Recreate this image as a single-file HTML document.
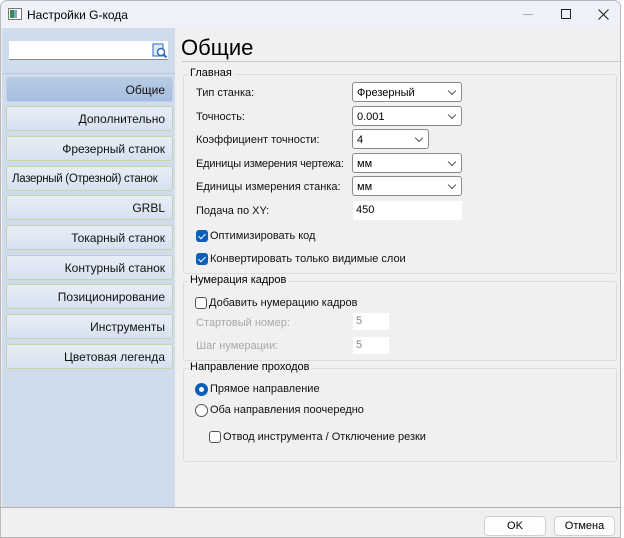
<!DOCTYPE html>
<html><head><meta charset="utf-8"><style>
*{box-sizing:border-box;margin:0;padding:0}
body{width:624px;height:538px;overflow:hidden;background:#fff;font-family:"Liberation Sans","DejaVu Sans",sans-serif;font-size:11px;color:#000;position:relative}
.abs{position:absolute;white-space:nowrap}
.win{left:0;top:0;width:621px;height:538px;background:#f0f0f0;border:1px solid #b8b8b8;border-radius:7px 7px 0 0;overflow:hidden}
.title{left:0;top:0;width:621px;height:27px;background:#eef2f8}
.side{left:1px;top:27px;width:173px;height:479px;background:#cfdcec}
.btn{position:absolute;left:4px;width:167px;height:25px;border:1px solid #c6d3a8;border-radius:3px;background:linear-gradient(#e8eef7,#d6e1ef);text-align:right;padding-right:7px;line-height:24px;font-size:12px;color:#111;white-space:nowrap}
.btn.sel{background:linear-gradient(#b8cbe6,#a6bddd);border-color:#c0cde0}
.lbl{position:absolute;font-size:11px;color:#111;white-space:nowrap}
.combo{position:absolute;height:20px;background:#fff;border:1px solid #8a8a8a;border-radius:3px;padding-left:4px;line-height:20px;font-size:11px}
.combo:after{content:"";position:absolute;right:6px;top:5px;width:5px;height:5px;border-right:1px solid #555;border-bottom:1px solid #555;transform:rotate(45deg)}
.grp{position:absolute;border:1px solid #dcdcdc;border-radius:3px}
.gt{position:absolute;background:#f0f0f0;padding:0 2px;font-size:11px;top:-8px;left:4px;white-space:nowrap}
.cb{position:absolute;width:12px;height:12px;border-radius:3px;background:#0a5fb8}
.cb:after{content:"";position:absolute;left:4px;top:2px;width:3px;height:6px;border-right:1.5px solid #fff;border-bottom:1.5px solid #fff;transform:rotate(45deg)}
.cbe{position:absolute;width:12px;height:12px;border-radius:3px;border:1px solid #555;background:#fff}
.pbtn{position:absolute;height:20px;background:#fdfdfd;border:1px solid #d0d0d0;border-radius:4px;text-align:center;line-height:18px;font-size:11px}
</style></head><body>
<div class="abs win">
<div class="abs title"></div>
<svg class="abs" style="left:7px;top:7px" width="14" height="12"><rect x="0.5" y="0.5" width="13" height="11" fill="#fff" stroke="#777"/><rect x="2" y="2" width="4" height="8" fill="#3a8a5a"/><rect x="6" y="2" width="3" height="8" fill="#7fa8d0"/></svg>
<div class="abs" style="left:26px;top:7px;font-size:12px">Настройки G-кода</div>
<div class="abs" style="left:522px;top:13px;width:10px;height:1px;background:#aaa"></div>
<div class="abs" style="left:560px;top:8px;width:10px;height:10px;border:1px solid #222"></div>
<svg class="abs" style="left:597px;top:8px" width="11" height="11"><path d="M0.5 0.5L10.5 10.5M10.5 0.5L0.5 10.5" stroke="#222" stroke-width="1.1"/></svg>

<div class="abs side">
<div class="abs" style="left:7px;top:13px;width:159px;height:19px;background:#fff;border-bottom:1px solid #888"></div>
<svg class="abs" style="left:150px;top:15px" width="16" height="16"><rect x="1" y="1" width="10" height="12" fill="#dfeaf8" stroke="#2a6ac0"/><circle cx="9" cy="9" r="3.5" fill="#fff" stroke="#2a6ac0" stroke-width="1.4"/><path d="M11.5 11.5L14.5 14.5" stroke="#2a6ac0" stroke-width="2"/></svg>
<div class="abs" style="left:0;top:45px;width:173px;height:1px;background:#b8c6d8"></div>
<div class="btn sel" style="top:49px">Общие</div>
<div class="btn" style="top:78px">Дополнительно</div>
<div class="btn" style="top:108px">Фрезерный станок</div>
<div class="btn" style="top:138px;text-align:left;padding-left:5px;font-size:11.5px;letter-spacing:-0.3px">Лазерный (Отрезной) станок</div>
<div class="btn" style="top:167px">GRBL</div>
<div class="btn" style="top:197px">Токарный станок</div>
<div class="btn" style="top:227px">Контурный станок</div>
<div class="btn" style="top:256px">Позиционирование</div>
<div class="btn" style="top:286px">Инструменты</div>
<div class="btn" style="top:316px">Цветовая легенда</div>
</div>

<div class="abs" style="left:180px;top:34px;font-size:22px;color:#000">Общие</div>
<div class="abs" style="left:181px;top:60px;width:439px;height:1px;background:#c8c8c8"></div>

<div class="grp" style="left:182px;top:73px;width:434px;height:200px"><span class="gt">Главная</span></div>
<div class="lbl" style="left:195px;top:86px">Тип станка:</div>
<div class="combo" style="left:351px;top:81px;width:110px">Фрезерный</div>
<div class="lbl" style="left:195px;top:110px">Точность:</div>
<div class="combo" style="left:351px;top:105px;width:110px">0.001</div>
<div class="lbl" style="left:195px;top:133px">Коэффициент точности:</div>
<div class="combo" style="left:351px;top:128px;width:77px">4</div>
<div class="lbl" style="left:195px;top:157px;letter-spacing:-0.2px">Единицы измерения чертежа:</div>
<div class="combo" style="left:351px;top:152px;width:110px">мм</div>
<div class="lbl" style="left:195px;top:180px">Единицы измерения станка:</div>
<div class="combo" style="left:351px;top:175px;width:110px">мм</div>
<div class="lbl" style="left:195px;top:204px">Подача по XY:</div>
<div class="abs" style="left:352px;top:200px;width:109px;height:19px;background:#fff;padding-left:3px;line-height:19px">450</div>
<div class="cb" style="left:195px;top:229px"></div>
<div class="lbl" style="left:209px;top:229px">Оптимизировать код</div>
<div class="cb" style="left:195px;top:252px"></div>
<div class="lbl" style="left:209px;top:252px">Конвертировать только видимые слои</div>

<div class="grp" style="left:182px;top:280px;width:434px;height:80px"><span class="gt">Нумерация кадров</span></div>
<div class="cbe" style="left:194px;top:296px"></div>
<div class="lbl" style="left:208px;top:296px">Добавить нумерацию кадров</div>
<div class="lbl" style="left:195px;top:316px;color:#a8a8a8">Стартовый номер:</div>
<div class="abs" style="left:352px;top:312px;width:36px;height:17px;background:#fff;padding-left:3px;line-height:17px;color:#888">5</div>
<div class="lbl" style="left:195px;top:339px;color:#a8a8a8">Шаг нумерации:</div>
<div class="abs" style="left:352px;top:336px;width:36px;height:17px;background:#fff;padding-left:3px;line-height:17px;color:#888">5</div>

<div class="grp" style="left:182px;top:367px;width:434px;height:94px"><span class="gt">Направление проходов</span></div>
<div class="abs" style="left:194px;top:382px;width:13px;height:13px;border-radius:50%;background:#0a5fb8"><div class="abs" style="left:4px;top:4px;width:5px;height:5px;border-radius:50%;background:#fff"></div></div>
<div class="lbl" style="left:209px;top:382px">Прямое направление</div>
<div class="abs" style="left:194px;top:403px;width:13px;height:13px;border-radius:50%;border:1px solid #555;background:#fff"></div>
<div class="lbl" style="left:209px;top:403px">Оба направления поочередно</div>
<div class="cbe" style="left:208px;top:430px"></div>
<div class="lbl" style="left:222px;top:430px">Отвод инструмента / Отключение резки</div>

<div class="abs" style="left:0;top:506px;width:621px;height:1px;background:#b0b0b0"></div>
<div class="abs" style="left:0;top:507px;width:621px;height:31px;background:#f0f0f0"></div>
<div class="pbtn" style="left:483px;top:515px;width:62px">OK</div>
<div class="pbtn" style="left:553px;top:515px;width:61px">Отмена</div>
</div>
</body></html>
